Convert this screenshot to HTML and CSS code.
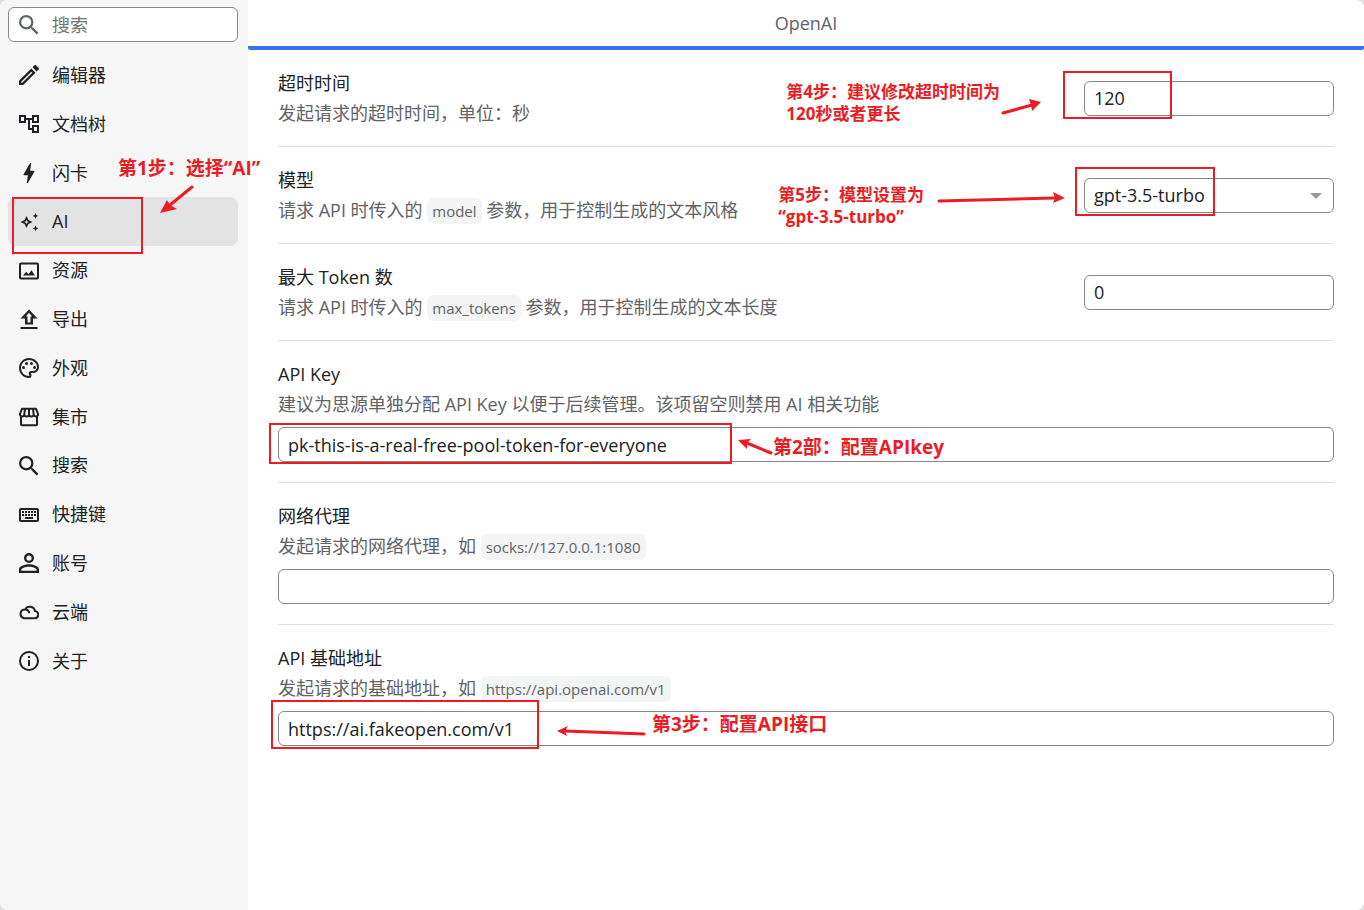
FILE: index.html
```html
<!DOCTYPE html>
<html lang="zh-CN">
<head>
  <meta charset="UTF-8" />
  <meta name="viewport" content="width=device-width, initial-scale=1.0"/>
  <title>设置 - AI</title>
  <link rel="stylesheet" href="styles.css">
</head>
<body>

  <div class="dialog">
    <aside class="sidebar">
      <div class="search">
        <svg class="icon" viewBox="3 3 18 18"><path d="M15.5 14h-.79l-.28-.27A6.47 6.47 0 0 0 16 9.5 6.5 6.5 0 1 0 9.5 16c1.61 0 3.09-.59 4.23-1.57l.27.28v.79l5 4.99L20.49 19l-4.99-5zm-6 0a4.5 4.5 0 1 1 0-9 4.5 4.5 0 0 1 0 9z"/></svg>
        <input type="text" placeholder="搜索" aria-label="搜索" />
      </div>

      <nav class="menu">
        <button class="item">
          <svg class="icon" viewBox="3 3 18 18"><path d="M14.06 9.02l.92.92L5.92 19H5v-.92l9.06-9.06M17.66 3c-.25 0-.51.1-.7.29l-1.83 1.83 3.75 3.75 1.83-1.83a1 1 0 0 0 0-1.41l-2.34-2.34c-.2-.2-.45-.29-.71-.29zm-3.6 3.19L3 17.25V21h3.75L17.81 9.94l-3.75-3.75z"/></svg>
          编辑器
        </button>
        <button class="item">
          <svg class="icon" viewBox="2 2 20 20"><path d="M22 11V3h-7v3H9V3H2v8h7V8h2v10h4v3h7v-8h-7v3h-2V8h2v3h7zM7 9H4V5h3v4zm10 6h3v4h-3v-4zm0-10h3v4h-3V5z"/></svg>
          文档树
        </button>
        <button class="item">
          <svg class="icon" viewBox="3 3 18 18"><path d="M11 21h-1l1-7H7.5c-.88 0-.33-.75-.31-.78C8.48 10.94 10.42 7.54 13.01 3h1l-1 7h3.51c.4 0 .62.19.4.66C12.97 17.55 11 21 11 21z"/></svg>
          闪卡
        </button>
        <button class="item active">
          <svg class="icon" viewBox="0 0 20 20"><path fill-rule="evenodd" d="M7.5 4l1.9 4.1 4.1 1.9-4.1 1.9-1.9 4.1-1.9-4.1L1.5 10l4.1-1.9zM7.5 8l-.7 1.3L5.3 10l1.5.7.7 1.4.7-1.4 1.5-.7-1.5-.7zM16.5 1l.9 2 2 .9-2 .9-.9 2-.9-2-2-.9 2-.9zM16.5 13.500l.9 2 2 .9-2 .9-.9 2-.9-2-2-.9 2-.9z"/></svg>
          AI
          <span class="box box-ai"></span>
        </button>
        <button class="item">
          <svg class="icon" viewBox="2 2 20 20"><path d="M20 5.500v13H4v-13h16m0-2H4c-1.100 0-2 .9-2 2v13c0 1.100.9 2 2 2h16c1.100 0 2-.9 2-2v-13c0-1.100-.9-2-2-2zM14.500 11.200l-3.100 4-2.200-2.400L6 16.500h12z"/></svg>
          资源
        </button>
        <button class="item">
          <svg class="icon" viewBox="3 2 18 20"><path fill-rule="evenodd" d="M3.500 20h17v2h-17zM8 17.500h8v-6h4.500L12 2.500l-8.500 9H8zM10.500 15.500v-6H8.800L12 5.800l3.200 3.700h-1.700v6z"/></svg>
          导出
        </button>
        <button class="item">
          <svg class="icon" viewBox="2 2 20 20"><path d="M12 22C6.490 22 2 17.510 2 12S6.490 2 12 2s10 4.040 10 9c0 3.310-2.690 6-6 6h-1.770c-.28 0-.5.22-.5.5 0 .12.050.23.130.33.41.47.64 1.060.64 1.670A2.500 2.500 0 0 1 12 22zm0-18c-4.410 0-8 3.590-8 8s3.590 8 8 8c.28 0 .5-.22.5-.5a.54.54 0 0 0-.14-.35c-.41-.46-.63-1.050-.63-1.650a2.500 2.500 0 0 1 2.500-2.500H16c2.210 0 4-1.790 4-4 0-3.860-3.590-7-8-7z"/><circle cx="6.500" cy="11.500" r="1.500"/><circle cx="9.500" cy="7.500" r="1.500"/><circle cx="14.500" cy="7.500" r="1.500"/><circle cx="17.500" cy="11.500" r="1.500"/></svg>
          外观
        </button>
        <button class="item">
          <svg class="icon line" viewBox="0 0 20 20"><path d="M3 1.800h14l2 5c.3 1.500-.7 2.700-2 2.700s-2.300-1-2.300-2.200c0 1.200-1 2.200-2.400 2.200S10 8.500 10 7.300c0 1.200-1 2.200-2.300 2.200S5.300 8.500 5.300 7.300C5.300 8.500 4.300 9.500 3 9.500S.7 8.300 1 6.800zM5.300 7.300L6 2M10 7.300V2M14.700 7.300L14 2M2 9.500v7.700c0 .6.400 1 1 1h14c.6 0 1-.4 1-1V9.500"/></svg>
          集市
        </button>
        <button class="item">
          <svg class="icon" viewBox="3 3 18 18"><path d="M15.5 14h-.79l-.28-.27A6.47 6.47 0 0 0 16 9.5 6.5 6.5 0 1 0 9.5 16c1.61 0 3.09-.59 4.23-1.57l.27.28v.79l5 4.99L20.49 19l-4.99-5zm-6 0a4.5 4.5 0 1 1 0-9 4.5 4.5 0 0 1 0 9z"/></svg>
          搜索
        </button>
        <button class="item">
          <svg class="icon" viewBox="2 2 20 20"><path d="M20 7v10H4V7h16m0-2H4c-1.100 0-2 .9-2 2v10c0 1.100.9 2 2 2h16c1.100 0 2-.9 2-2V7c0-1.100-.9-2-2-2zM11 8h2v2h-2zM11 11h2v2h-2zM8 8h2v2H8zM8 11h2v2H8zM5 11h2v2H5zM5 8h2v2H5zM8 14h8v2H8zM14 11h2v2h-2zM14 8h2v2h-2zM17 11h2v2h-2zM17 8h2v2h-2z"/></svg>
          快捷键
        </button>
        <button class="item">
          <svg class="icon" viewBox="4 4 16 16"><path d="M12 5.900a2.100 2.100 0 1 1 0 4.200 2.100 2.100 0 0 1 0-4.200m0 9c2.970 0 6.100 1.460 6.100 2.100v1.100H5.900V17c0-.64 3.130-2.100 6.100-2.100M12 4a4 4 0 1 0 0 8 4 4 0 0 0 0-8zm0 9c-2.670 0-8 1.340-8 4v3h16v-3c0-2.660-5.330-4-8-4z"/></svg>
          账号
        </button>
        <button class="item">
          <svg class="icon line" viewBox="0 0 20 20"><path d="M5 16.300h10.500a3.600 3.600 0 0 0 .4-7.200A5.300 5.300 0 0 0 6 7.600a4.400 4.400 0 0 0-1 8.700zM6 7.600c2.200 0 3.900 1.400 4.300 3.600"/></svg>
          云端
        </button>
        <button class="item">
          <svg class="icon" viewBox="2 2 20 20"><path d="M11 7h2v2h-2zm0 4h2v6h-2zm1-9a10 10 0 1 0 0 20 10 10 0 0 0 0-20zm0 18a8 8 0 1 1 0-16 8 8 0 0 1 0 16z"/></svg>
          关于
        </button>
      </nav>

      <p class="note note-ai">第1步：选择“AI”</p>
      <svg class="arrow arrow-ai" width="36" height="30" viewBox="0 0 36 30"><path d="M33 2L11 20"/><polygon points="1,28 8,15 11,20 18,24"/></svg>
    </aside>

    <main class="content">
      <header class="tabs">
        <button class="tab">OpenAI</button>
      </header>

      <div class="panel">
        <section class="row">
          <div class="text">
            <label class="title" for="timeout">超时时间</label>
            <p class="desc">发起请求的超时时间，单位：秒</p>
          </div>
          <input class="field small" type="text" id="timeout" value="120" />
          <span class="box box-timeout"></span>
          <p class="note note-timeout">第4步：建议修改超时时间为<br>120秒或者更长</p>
          <svg class="arrow arrow-timeout" width="42" height="18" viewBox="0 0 42 18"><path d="M3 15L32 7"/><polygon points="41,4 29,1 31,7 32,13"/></svg>
        </section>

        <section class="row">
          <div class="text">
            <label class="title" for="model">模型</label>
            <p class="desc">请求 API 时传入的 <code>model</code> 参数，用于控制生成的文本风格</p>
          </div>
          <div class="select small">
            <select class="field" id="model">
              <option>gpt-3.5-turbo</option>
            </select>
          </div>
          <span class="box box-model"></span>
          <p class="note note-model">第5步：模型设置为<br>“gpt-3.5-turbo”</p>
          <svg class="arrow arrow-model" width="130" height="14" viewBox="0 0 130 14"><path d="M3 10L118 7"/><polygon points="129,7 117,1 119,7 117,12"/></svg>
        </section>

        <section class="row">
          <div class="text">
            <label class="title" for="tokens">最大 Token 数</label>
            <p class="desc">请求 API 时传入的 <code>max_tokens</code> 参数，用于控制生成的文本长度</p>
          </div>
          <input class="field small" type="text" id="tokens" value="0" />
        </section>

        <section class="row block">
          <div class="text">
            <label class="title" for="key">API Key</label>
            <p class="desc">建议为思源单独分配 API Key 以便于后续管理。该项留空则禁用 AI 相关功能</p>
          </div>
          <input class="field" type="text" id="key" value="pk-this-is-a-real-free-pool-token-for-everyone" />
          <span class="box box-key"></span>
          <p class="note note-key">第2部：配置APIkey</p>
          <svg class="arrow arrow-key" width="36" height="16" viewBox="0 0 36 16"><path d="M33 14L9 4"/><polygon points="0,1 13,0 9,4 9,10"/></svg>
        </section>

        <section class="row block">
          <div class="text">
            <label class="title" for="proxy">网络代理</label>
            <p class="desc">发起请求的网络代理，如 <code>socks://127.0.0.1:1080</code></p>
          </div>
          <input class="field" type="text" id="proxy" value="" />
        </section>

        <section class="row block">
          <div class="text">
            <label class="title" for="base">API 基础地址</label>
            <p class="desc">发起请求的基础地址，如 <code>https://api.openai.com/v1</code></p>
          </div>
          <input class="field" type="text" id="base" value="https://ai.fakeopen.com/v1" />
          <span class="box box-base"></span>
          <p class="note note-base">第3步：配置API接口</p>
          <svg class="arrow arrow-base" width="92" height="12" viewBox="0 0 92 12"><path d="M88 9L9 6"/><polygon points="1,6 12,1 9,6 11,11"/></svg>
        </section>
      </div>
    </main>
  </div>

</body>
</html>
```
FILE: styles.css
```css
* {
  margin: 0;
  padding: 0;
  box-sizing: border-box;
}

body {
  font-family: 'Open Sans', 'Noto Sans CJK SC', sans-serif;
  font-size: 18px;
  color: #202124;
  background: #dfe0e1;
}

button, input, select {
  font: inherit;
  color: inherit;
}

.dialog {
  display: flex;
  min-height: 100vh;
  background: #fff;
  border-radius: 8px;
  overflow: hidden;
}

/* sidebar */
.sidebar {
  position: relative;
  flex: none;
  width: 248px;
  padding: 7px 10px 10px 8px;
  background: #f6f6f6;
}

.search {
  display: flex;
  align-items: center;
  gap: 13px;
  height: 35px;
  padding: 0 10px;
  border: 1px solid #85878a;
  border-radius: 6px;
  background: #fff;
  color: #5f6368;
}

.search input {
  flex: 1;
  min-width: 0;
  border: none;
  outline: none;
  background: none;
}

.search input::placeholder {
  color: #757575;
}

.icon {
  flex: none;
  width: 20px;
  height: 20px;
  fill: currentColor;
}

.icon.line {
  fill: none;
  stroke: currentColor;
  stroke-width: 2;
  stroke-linejoin: round;
}

.menu {
  display: flex;
  flex-direction: column;
  margin-top: 9px;
}

.item {
  position: relative;
  display: flex;
  align-items: center;
  gap: 13px;
  padding: 10px 11px;
  border: none;
  border-radius: 8px;
  background: none;
  line-height: 1.6;
  text-align: left;
  cursor: pointer;
}

.item.active {
  background: #e3e3e3;
}

/* content */
.content {
  flex: 1;
  min-width: 0;
}

.tabs {
  display: flex;
}

.tab {
  flex: 1;
  height: 50px;
  border: none;
  background: linear-gradient(#3575f0, #3575f0) bottom / 100% 4px no-repeat;
  color: #5f6368;
  padding-bottom: 4px;
  border-radius: 2px;
}

.panel {
  padding: 0 30px;
}

.row {
  position: relative;
  display: flex;
  align-items: center;
  justify-content: space-between;
  gap: 10px;
  padding: 20px 0;
  border-bottom: 1px solid #dfe0e1;
}

.row:last-child {
  border-bottom: none;
}

.row.block {
  flex-direction: column;
  align-items: stretch;
}

.title,
.desc {
  display: block;
  line-height: 26px;
}

.desc {
  margin-top: 4px;
  color: #5f6368;
}

code {
  padding: 3px 5px;
  border-radius: 6px;
  background: #f3f4f4;
  font-family: 'Open Sans', sans-serif;
  font-size: 15px;
  line-height: 1;
}

.field {
  width: 100%;
  height: 35px;
  padding: 0 9px;
  border: 1px solid #85878a;
  border-radius: 6px;
  background: #fff;
  outline: none;
}

.small {
  flex: none;
  width: 250px;
}

.select {
  position: relative;
}

.select .field {
  display: block;
  appearance: none;
}

.select::after {
  content: '';
  position: absolute;
  right: 12px;
  top: 15px;
  border: 6px solid transparent;
  border-top-color: #96999c;
  border-bottom: none;
  pointer-events: none;
}

/* red step marks, lying over the form */
.box,
.note,
.arrow {
  position: absolute;
  pointer-events: none;
}

.box {
  border: 2px solid #ed1c24;
}

.note {
  color: #ed1c24;
  font-weight: bold;
  font-size: 19px;
  line-height: 22px;
  white-space: nowrap;
  z-index: 1;
}

.arrow {
  fill: #ed1c24;
  z-index: 1;
}

.arrow path {
  fill: none;
  stroke: #ed1c24;
  stroke-width: 3;
  stroke-linecap: round;
}

.box-ai {
  left: 4px;
  top: 0;
  width: 131px;
  height: 57px;
}

.note-ai {
  left: 118px;
  top: 157px;
}

.arrow-ai {
  left: 159px;
  top: 185px;
}

.box-timeout {
  right: 162px;
  top: 21px;
  width: 109px;
  height: 48px;
}

.note-timeout {
  right: 334px;
  top: 31px;
  font-size: 17px;
}

.arrow-timeout {
  right: 292px;
  top: 48px;
}

.box-model {
  right: 119px;
  top: 20px;
  width: 140px;
  height: 49px;
}

.note-model {
  right: 410px;
  top: 37px;
  font-size: 17px;
}

.arrow-model {
  right: 268px;
  top: 44px;
}

.box-key {
  left: -9px;
  top: 82px;
  width: 463px;
  height: 41px;
}

.note-key {
  left: 495px;
  top: 95px;
}

.arrow-key {
  left: 460px;
  top: 98px;
}

.box-base {
  left: -7px;
  top: 75px;
  width: 268px;
  height: 49px;
}

.note-base {
  left: 374px;
  top: 88px;
}

.arrow-base {
  left: 278px;
  top: 100px;
}
```
